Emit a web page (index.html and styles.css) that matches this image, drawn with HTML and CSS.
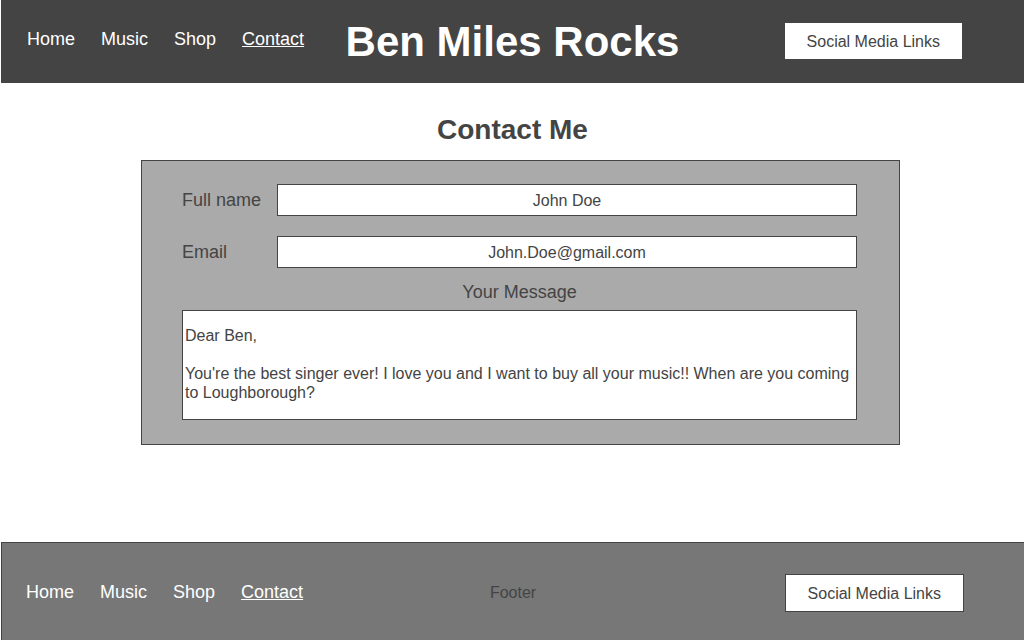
FILE: index.html
```html
<!DOCTYPE html>
<html lang="en">
<head>
  <meta charset="utf-8">
  <meta name="viewport" content="width=device-width, initial-scale=1">
  <title>Ben Miles Rocks</title>
  <link rel="stylesheet" href="styles.css">
</head>
<body class="page">
  <header class="bar header">
    <nav class="nav" aria-label="Main">
      <a class="nav-link" href="#home">Home</a>
      <a class="nav-link" href="#music">Music</a>
      <a class="nav-link" href="#shop">Shop</a>
      <a class="nav-link current" href="#contact" aria-current="page">Contact</a>
    </nav>
    <h1 class="title">Ben Miles Rocks</h1>
    <button class="social" type="button">Social Media Links</button>
  </header>

  <main class="main">
    <h2 class="heading">Contact Me</h2>
    <form class="form">
      <div class="field">
        <label class="label" for="name">Full name</label>
        <input class="control" id="name" type="text" value="John Doe">
      </div>
      <div class="field">
        <label class="label" for="email">Email</label>
        <input class="control" id="email" type="email" value="John.Doe@gmail.com">
      </div>
      <div class="message">
        <label class="label message-label" for="message">Your Message</label>
        <textarea class="control message-text" id="message" rows="4">Dear Ben,

You're the best singer ever! I love you and I want to buy all your music!! When are you coming to Loughborough?</textarea>
      </div>
    </form>
  </main>

  <footer class="bar footer">
    <nav class="nav" aria-label="Footer">
      <a class="nav-link" href="#home">Home</a>
      <a class="nav-link" href="#music">Music</a>
      <a class="nav-link" href="#shop">Shop</a>
      <a class="nav-link current" href="#contact" aria-current="page">Contact</a>
    </nav>
    <p class="footer-text">Footer</p>
    <button class="social" type="button">Social Media Links</button>
  </footer>
</body>
</html>
```
FILE: styles.css
```css
* {
  box-sizing: border-box;
}

.page {
  display: flex;
  flex-direction: column;
  min-height: 100vh;
  margin: 0;
  padding-left: 1px;
  background: #fff;
  color: #444;
  font: 16px/19px "Liberation Sans", Arial, sans-serif;
}

.bar {
  display: grid;
  grid-template-columns: 1fr auto 1fr;
  align-items: center;
}

.header {
  padding: 17px 0 16px;
  background: #444;
}

.nav {
  display: flex;
  gap: 26px;
  padding: 0 0 6px 26px;
}

.nav-link {
  color: #fff;
  font-size: 18px;
  line-height: 22px;
  text-decoration: none;
}

.current {
  text-decoration: underline;
}

.title {
  margin: 0;
  color: #fff;
  font-size: 42px;
  line-height: 50px;
}

.social {
  justify-self: end;
  margin-right: 61px;
  padding: 10px 22px 8px;
  border: 1px solid #444;
  border-radius: 0;
  background: #fff;
  color: #444;
  font: inherit;
  line-height: 18px;
}

.header .social {
  margin-bottom: 2px;
}

.main {
  flex: 1;
}

.heading {
  margin: 30px 0 14px;
  font-size: 28px;
  line-height: 33px;
  text-align: center;
}

.form {
  display: flex;
  flex-direction: column;
  gap: 20px;
  margin: 0 124px 40px 140px;
  padding: 23px 42px 24px 40px;
  border: 1px solid #444;
  background: #aaa;
}

.field {
  display: grid;
  grid-template-columns: 95px 1fr;
  align-items: center;
}

.label {
  font-size: 18px;
  line-height: 22px;
}

.control {
  width: 100%;
  margin: 0;
  padding: 7px 2px 5px;
  border: 1px solid #444;
  border-radius: 0;
  background: #fff;
  color: #444;
  font: inherit;
  line-height: 18px;
  text-align: center;
}

.message {
  display: flex;
  flex-direction: column;
  gap: 7px;
  margin-top: -7px;
}

.message-label {
  text-align: center;
}

.message-text {
  display: block;
  padding: 15px 2px 17px;
  line-height: 19px;
  text-align: left;
  resize: none;
  overflow: hidden;
}

.footer {
  min-height: 98px;
  padding: 29px 0 26px;
  border: solid #444;
  border-width: 1px 0 0 1px;
  background: #777;
}

.footer .nav {
  padding: 0 0 2px 24px;
}

.footer .social {
  margin-right: 60px;
}

.footer-text {
  margin: 0;
  padding-bottom: 2px;
}
```
